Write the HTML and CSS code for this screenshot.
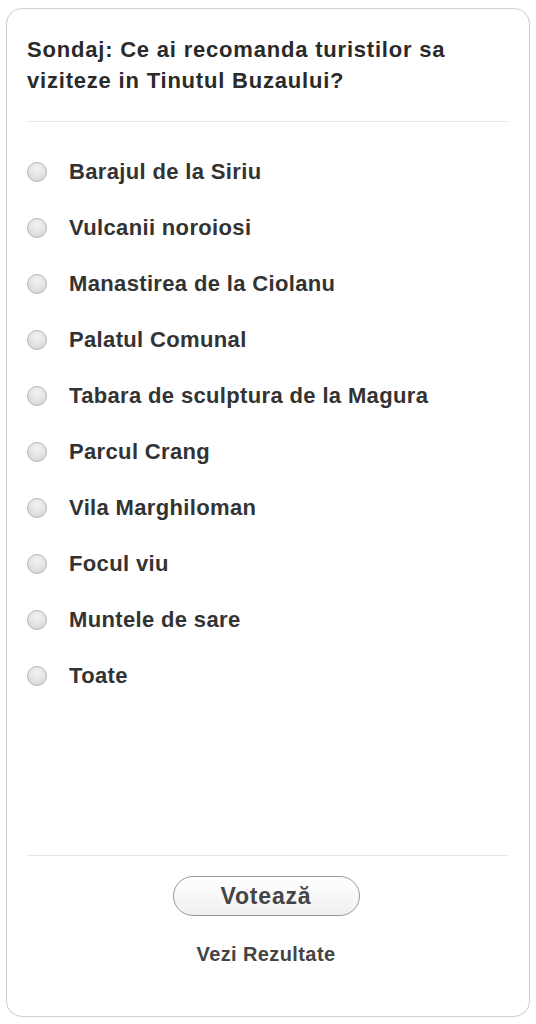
FILE: index.html
```html
<!DOCTYPE html>
<html lang="ro">
<head>
<meta charset="utf-8">
<title>Sondaj</title>
<link rel="stylesheet" href="styles.css">
</head>
<body>
<div class="card">
  <h2 class="title">Sondaj: Ce ai recomanda turistilor sa<br>viziteze in Tinutul Buzaului?</h2>
  <div class="divider"></div>
  <ul class="options">
    <li class="option"><span class="radio"></span><span class="label">Barajul de la Siriu</span></li>
    <li class="option"><span class="radio"></span><span class="label">Vulcanii noroiosi</span></li>
    <li class="option"><span class="radio"></span><span class="label">Manastirea de la Ciolanu</span></li>
    <li class="option"><span class="radio"></span><span class="label">Palatul Comunal</span></li>
    <li class="option"><span class="radio"></span><span class="label">Tabara de sculptura de la Magura</span></li>
    <li class="option"><span class="radio"></span><span class="label">Parcul Crang</span></li>
    <li class="option"><span class="radio"></span><span class="label">Vila Marghiloman</span></li>
    <li class="option"><span class="radio"></span><span class="label">Focul viu</span></li>
    <li class="option"><span class="radio"></span><span class="label">Muntele de sare</span></li>
    <li class="option"><span class="radio"></span><span class="label">Toate</span></li>
  </ul>
  <div class="divider"></div>
  <div class="actions">
    <button class="vote">Votează</button>
    <a class="results">Vezi Rezultate</a>
  </div>
</div>
</body>
</html>
```
FILE: styles.css
```css
html, body {
  margin: 0;
  padding: 0;
  background: #fff;
}
body {
  font-family: "Liberation Sans", Arial, sans-serif;
  padding: 8px 6px;
}
.card {
  box-sizing: border-box;
  width: 524px;
  height: 1009px;
  border: 1px solid #d0d0d0;
  border-radius: 16px;
  padding: 25px 20px 0 20px;
  display: flex;
  flex-direction: column;
  box-shadow: 0 0 2px rgba(0,0,0,0.06);
}
.title {
  margin: 0;
  font-size: 22px;
  line-height: 31px;
  font-weight: bold;
  letter-spacing: 0.8px;
  color: #2a2a2a;
}
.divider {
  height: 1px;
  background: #e6e6e6;
  margin-right: 1px;
}
.card > .title + .divider {
  margin-top: 25px;
}
.options {
  list-style: none;
  margin: 22px 0 0 0;
  padding: 0;
  flex: 1;
}
.option {
  height: 56px;
  display: flex;
  align-items: center;
}
.radio {
  box-sizing: border-box;
  width: 20px;
  height: 20px;
  border-radius: 50%;
  border: 1px solid #b5b5b5;
  background: radial-gradient(circle at 50% 35%, #f4f4f4 0%, #e2e2e2 55%, #cfcfcf 100%);
  margin-right: 22px;
  flex: none;
}
.label {
  font-size: 22px;
  font-weight: bold;
  letter-spacing: 0.35px;
  color: #333;
}
.actions {
  display: flex;
  flex-direction: column;
  align-items: center;
  padding-top: 20px;
  padding-right: 4px;
  height: 160px;
  box-sizing: border-box;
}
.vote {
  width: 187px;
  height: 40px;
  border: 1px solid #9a9a9a;
  border-radius: 20px;
  background: linear-gradient(#ffffff, #f0f0f0);
  font-family: "Liberation Sans", Arial, sans-serif;
  font-size: 23px;
  font-weight: bold;
  letter-spacing: 0.8px;
  color: #444;
  padding: 0;
}
.results {
  margin-top: 27px;
  font-size: 20px;
  font-weight: bold;
  letter-spacing: 0.4px;
  color: #444;
}
```
